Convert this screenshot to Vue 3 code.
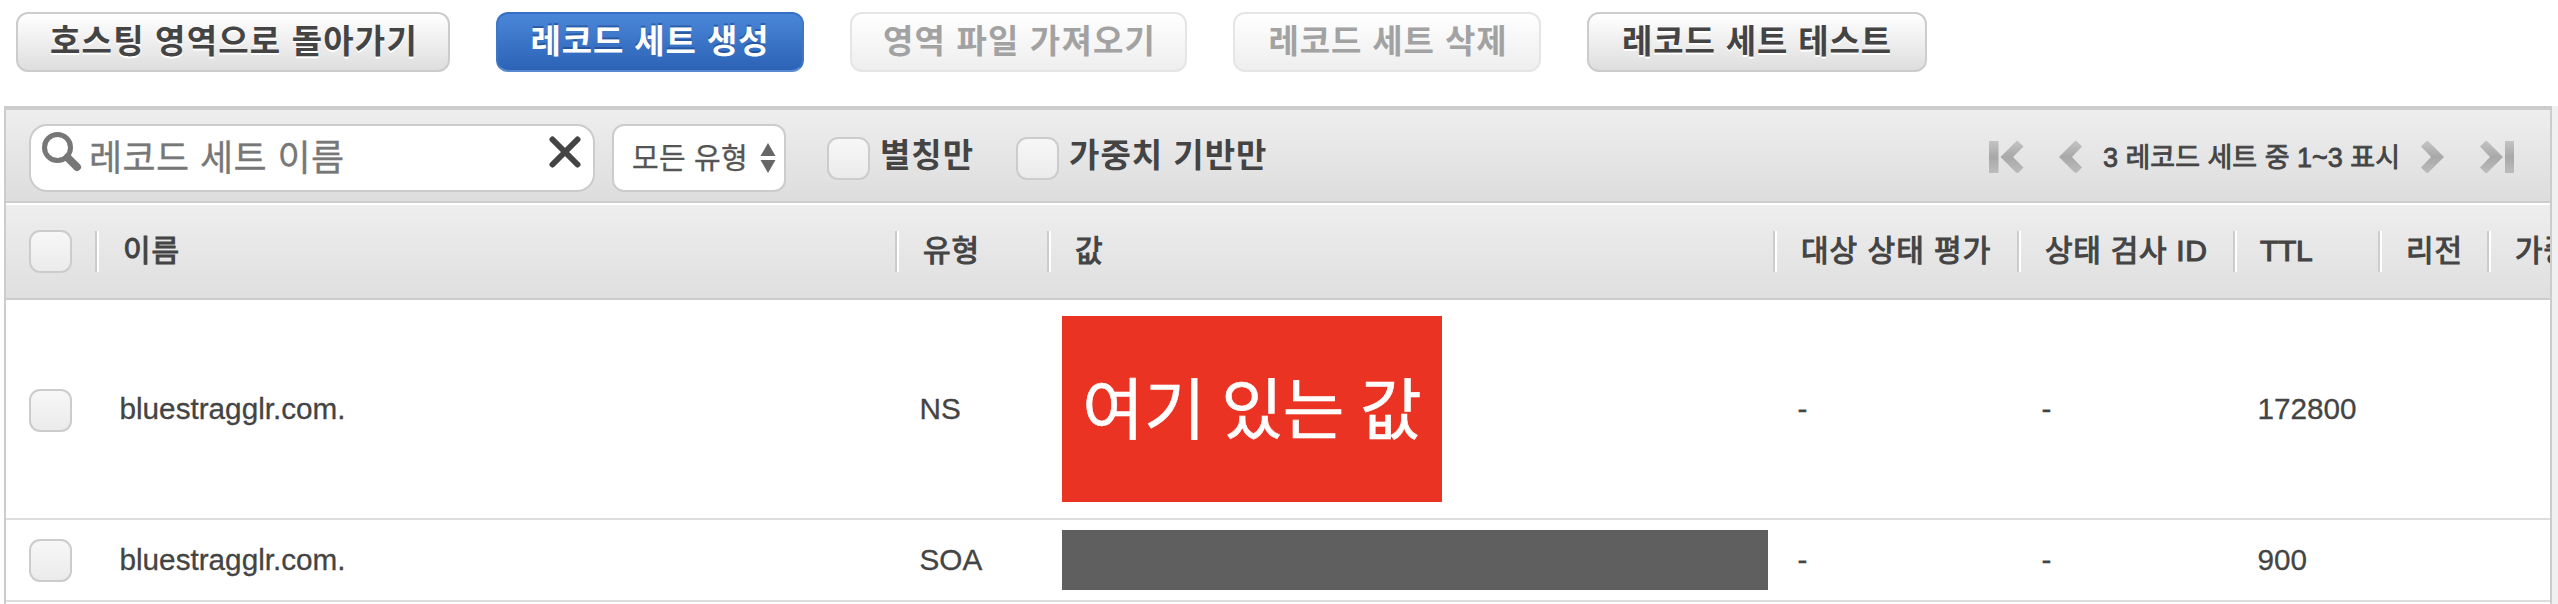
<script setup>
const actions = [
  { label: '호스팅 영역으로 돌아가기', kind: 'b1' },
  { label: '레코드 세트 생성', kind: 'b2 primary' },
  { label: '영역 파일 가져오기', kind: 'b3 disabled' },
  { label: '레코드 세트 삭제', kind: 'b4 disabled' },
  { label: '레코드 세트 테스트', kind: 'b5' },
]
const columns = ['이름', '유형', '값', '대상 상태 평가', '상태 검사 ID', 'TTL', '리전', '가중치']
const rows = [
  { name: 'bluestragglr.com.', type: 'NS', note: '여기 있는 값', ttl: '172800' },
  { name: 'bluestragglr.com.', type: 'SOA', note: '', ttl: '900' },
]
</script>

<template>
  <div class="page">
    <div class="actions">
      <button v-for="a in actions" :key="a.label" class="btn" :class="a.kind"><span>{{ a.label }}</span></button>
    </div>

    <div class="panel">
      <div class="toolbar">
        <div class="search">
          <svg class="lens" width="40" height="41" viewBox="0 0 40 41">
            <circle cx="15.5" cy="16.5" r="13" fill="none" stroke="#777" stroke-width="5" />
            <path d="M25.5 26.5 L35 36" stroke="#777" stroke-width="8" stroke-linecap="round" />
          </svg>
          <span class="hint">레코드 세트 이름</span>
          <svg class="clear" width="32" height="32" viewBox="0 0 32 32">
            <path d="M3.500 3.500 L28.500 28.500 M28.500 3.500 L3.500 28.500" stroke="#444" stroke-width="6" stroke-linecap="round" />
          </svg>
        </div>
        <div class="select">
          <span>모든 유형</span>
          <svg width="16" height="30" viewBox="0 0 16 30">
            <path d="M8 0 L15.5 13 H.5 Z M.5 17 H15.5 L8 30 Z" fill="#666" />
          </svg>
        </div>
        <span class="check first"></span><span class="label">별칭만</span>
        <span class="check second"></span><span class="label">가중치 기반만</span>

        <div class="pager">
          <svg width="94" height="34" viewBox="0 0 94 34">
            <defs>
              <linearGradient id="steel" x1="0" y1="0" x2="0" y2="1">
                <stop offset="0" stop-color="#c4c4c4" />
                <stop offset=".5" stop-color="#a8a8a8" />
                <stop offset="1" stop-color="#bcbcbc" />
              </linearGradient>
            </defs>
            <g fill="url(#steel)">
              <path d="M0 1 H9.5 V33 H0 Z" />
              <path d="M29 1 L34.5 6.5 L24 17 L34.5 27.5 L29 33 L27.5 33 L11.5 17 L27.5 1 Z" />
              <path d="M87.500 1 L93 6.500 L83 17 L93 27.500 L87.500 33 L86 33 L70 17 L86 1 Z" />
            </g>
          </svg>
          <span class="count">3 레코드 세트 중 1~3 표시</span>
          <svg width="94" height="34" viewBox="0 0 94 34">
            <g fill="url(#steel)">
              <path d="M6.500 1 L1 6.500 L11 17 L1 27.500 L6.500 33 L8 33 L24 17 L8 1 Z" />
              <path d="M65.500 1 L60 6.500 L70 17 L60 27.500 L65.500 33 L67 33 L83 17 L67 1 Z" />
              <path d="M85 1 H94 V33 H85 Z" />
            </g>
          </svg>
        </div>
      </div>

      <div class="grid head">
        <div class="pick"><span class="check"></span></div>
        <div v-for="c in columns" :key="c" class="th"><span>{{ c }}</span></div>
      </div>

      <div v-for="r in rows" :key="r.type" class="grid row" :class="r.type.toLowerCase()">
        <div class="pick"><span class="check"></span></div>
        <div class="td">{{ r.name }}</div>
        <div class="td">{{ r.type }}</div>
        <div class="value"><div class="cover">{{ r.note }}</div></div>
        <div class="td">-</div>
        <div class="td">-</div>
        <div class="td">{{ r.ttl }}</div>
      </div>
    </div>
  </div>
</template>

<style>
body { background: #fff; overflow: hidden; }
</style>

<style scoped>
.page {
  width: 2558px;
  height: 604px;
  overflow: hidden;
  box-sizing: border-box;
  padding-top: 12px;
  font-family: "Liberation Sans", "Noto Sans CJK KR", sans-serif;
  color: #444;
  white-space: nowrap;
}
.actions { display: flex; gap: 46px; padding-left: 16px; height: 94px; }
.btn {
  height: 60px;
  box-sizing: border-box;
  padding: 0;
  border: 2px solid #ccc;
  border-radius: 12px;
  background: linear-gradient(#fff, #dedede);
  font: bold 33px/40px "Liberation Sans", "Noto Sans CJK KR", sans-serif;
  letter-spacing: .9px;
  color: #444;
  text-shadow: 0 2px 0 #fff;
}
.b1 { width: 434px; letter-spacing: 1.2px; padding-left: 2px; }
.b2 { width: 308px; }
.b3 { width: 337px; letter-spacing: 1.2px; padding-left: 2px; }
.b4 { width: 308px; padding-left: 2px; }
.b5 { width: 340px; }
.primary {
  background: linear-gradient(#4a86d8, #2c63b6);
  border-color: #3470c4 #3f76c6 #5a8ad0;
  color: #fff;
  text-shadow: 0 -2px 0 rgba(20, 60, 130, .5);
}
.disabled {
  border-color: #e5e5e5;
  background: linear-gradient(#fff, #eee);
  color: #a2a2a2;
  text-shadow: none;
}
.panel {
  margin-left: 4px;
  width: 2544px;
  height: 500px;
  border: solid #ccc;
  border-width: 4px 2px 0;
  box-shadow: 8px 0 0 #f0f0f0;
}
.toolbar {
  height: 91px;
  display: flex;
  align-items: center;
  background: linear-gradient(#eee, #ddd);
  border-bottom: 2px solid #ccc;
}
.search {
  box-sizing: border-box;
  width: 566px;
  height: 68px;
  margin: 5px 17px 0 23px;
  padding: 0 12px 0 11px;
  display: flex;
  align-items: center;
  background: #fff;
  border: 2px solid #ccc;
  border-radius: 18px;
}
.lens { margin: -13px 7px 0 0; }
.hint { margin-top: 2px; font-size: 36px; line-height: 40px; letter-spacing: .4px; color: #777; -webkit-text-stroke: .3px #777; }
.clear { margin: -12px 0 0 auto; }
.select {
  box-sizing: border-box;
  width: 174px;
  height: 68px;
  margin-top: 5px;
  padding: 0 8px 0 18px;
  display: flex;
  align-items: center;
  justify-content: space-between;
  background: #fff;
  border: 2px solid #ccc;
  border-radius: 12px;
  font-size: 29px;
  letter-spacing: .2px;
  color: #555;
  -webkit-text-stroke: .3px #555;
}
.select span { margin-top: -4px; }
.check {
  flex: none;
  box-sizing: border-box;
  width: 43px;
  height: 43px;
  border: 2px solid #ccc;
  border-radius: 11px;
  background: linear-gradient(#f7f7f7, #ebebeb);
}
.toolbar .check { margin-top: 6px; }
.first { margin-left: 41px; }
.second { margin-left: 42px; }
.label { margin-left: 10px; font: bold 33px/40px "Liberation Sans", "Noto Sans CJK KR", sans-serif; letter-spacing: 1px; }
.pager { margin: 2px 36px 0 auto; display: flex; align-items: center; }
.count { margin: -2px 20px 0; font-size: 27px; -webkit-text-stroke: .8px #444; }
.grid {
  display: grid;
  grid-template-columns: 89px 800px 152px 726px 244px 216px 145px 109px 63px;
  align-items: center;
  overflow: hidden;
}
.pick { padding-left: 23px; display: flex; }
.head {
  height: 93px;
  border-top: 2px solid #fff;
  border-bottom: 2px solid #ccc;
  background: linear-gradient(#eee, #dfdfdf);
}
.th {
  height: 41px;
  line-height: 40px;
  padding-left: 26px;
  border-left: 2px solid #ccc;
  box-shadow: inset 2px 0 0 #fff;
  font-size: 30px;
  letter-spacing: 1px;
  -webkit-text-stroke: 1.1px #444;
  overflow: hidden;
}
.th:nth-child(6) { letter-spacing: .7px; }
.th:nth-child(7) { padding-left: 25px; letter-spacing: -.3px; }
.row { border-bottom: 2px solid #ddd; font-size: 29.7px; }
.ns { height: 218px; }
.ns .check { margin-top: 2px; }
.soa { height: 80px; }
.td { padding-left: 24.500px; -webkit-text-stroke: .3px #444; }
.value { padding-left: 15px; }
.cover { box-sizing: border-box; }
.ns .cover {
  width: 380px;
  height: 186px;
  background: #eb3324;
  color: #fff;
  font-size: 67px;
  line-height: 190px;
  word-spacing: -3px;
  text-align: center;
  -webkit-text-stroke: .6px #fff;
}
.soa .cover { width: 706px; height: 60px; background: #5f5f5f; }
</style>
